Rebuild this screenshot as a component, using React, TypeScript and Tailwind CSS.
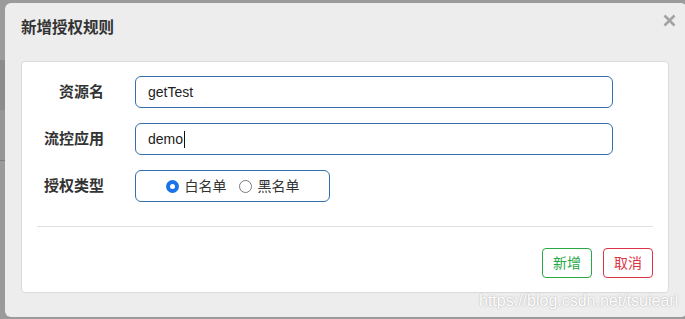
import React from 'react';

const FONT = '[font-family:"Liberation_Sans","Noto_Sans_CJK_SC",sans-serif]';

function Radio({ checked, label }: { checked: boolean; label: string }) {
  return (
    <label className="flex items-center gap-[6px]">
      {checked ? (
        <span className="flex h-[13px] w-[13px] items-center justify-center rounded-full bg-[#1a73e8]">
          <span className="h-[5px] w-[5px] rounded-full bg-white" />
        </span>
      ) : (
        <span className="h-[13px] w-[13px] rounded-full border border-[#7a7a7a] bg-white" />
      )}
      <span className="text-[14px] leading-none text-[#333]">{label}</span>
    </label>
  );
}

function Row({ label, children }: { label: string; children: React.ReactNode }) {
  return (
    <div className="flex h-[32px] items-center">
      <div className="w-[67px] text-right text-[15px] font-bold text-[#333]">{label}</div>
      <div className="ml-[31px]">{children}</div>
    </div>
  );
}

export default function App() {
  return (
    <div className={`flex h-[319px] w-[685px] overflow-hidden bg-[#9b9b9b] ${FONT}`}>
      {/* page behind the overlay */}
      <div className="flex w-[5px] shrink-0 flex-col">
        <div className="h-[60px] bg-[#9b9b9b]" />
        <div className="h-[50px] bg-[#8c8c8c]" />
        <div className="h-[50px] bg-[#969696]" />
        <div className="h-px bg-[#7c7c7c]" />
        <div className="flex-1 bg-[#9a9a9a]" />
      </div>

      <div className="relative mt-[3px] h-[314px] w-[682px] shrink-0 rounded-[6px] bg-[#ededed] px-[16px]">
        <div className="h-[58px] pt-[15px]">
          <h4 className="text-[15.5px] font-bold leading-[20px] text-[#333]">新增授权规则</h4>
        </div>

        <button className="absolute right-[11px] top-[11px] text-[#a3a3a3]" aria-label="close">
          <svg width="13" height="13" viewBox="0 0 13 13">
            <path d="M1.5 1.5 L11.5 11.5 M11.5 1.5 L1.5 11.5" stroke="currentColor" strokeWidth="2.6" strokeLinecap="butt" />
          </svg>
        </button>

        <div className="w-[648px] rounded-[4px] border border-[#dadada] bg-white px-[15px] pb-[14px] pt-[14px]">
          <Row label="资源名">
            <div className="flex h-[32px] w-[478px] items-center rounded-[6px] border border-[#336fae] px-[12px] text-[14px] text-[#222]">
              getTest
            </div>
          </Row>
          <div className="mt-[15px]">
            <Row label="流控应用">
              <div className="flex h-[32px] w-[478px] items-center rounded-[6px] border border-[#336fae] px-[12px] text-[14px] text-[#222]">
                demo
                <span className="ml-px inline-block h-[17px] w-px bg-[#111]" />
              </div>
            </Row>
          </div>
          <div className="mt-[15px]">
            <Row label="授权类型">
              <div className="flex h-[32px] w-[195px] items-center justify-center gap-[12px] rounded-[6px] border border-[#336fae]">
                <Radio checked label="白名单" />
                <Radio checked={false} label="黑名单" />
              </div>
            </Row>
          </div>

          <div className="mt-[24px] h-px bg-[#e0e0e0]" />

          <div className="mt-[21px] flex justify-end gap-[11px]">
            <button className="h-[30px] w-[50px] rounded-[4px] border border-[#28a745] bg-white text-[14px] text-[#28a745]">
              新增
            </button>
            <button className="h-[30px] w-[50px] rounded-[4px] border border-[#dc3545] bg-white text-[14px] text-[#dc3545]">
              取消
            </button>
          </div>
        </div>

        <div className="absolute left-[474px] top-[286px] text-[16px] text-white [text-shadow:0_0_1.5px_rgba(0,0,0,0.35)]">
          https://blog.csdn.net/tsuiearl
        </div>
      </div>
    </div>
  );
}
